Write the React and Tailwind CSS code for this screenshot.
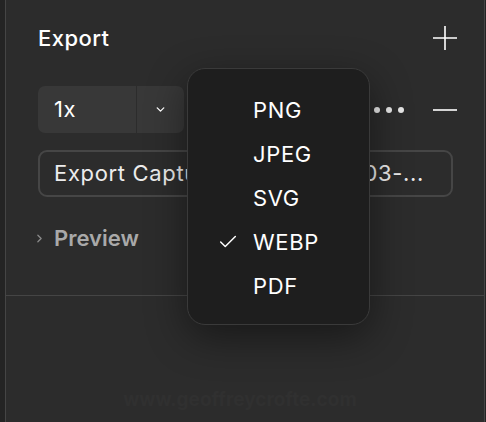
import { Check, ChevronDown, ChevronRight } from "lucide-react";

const formats = ["PNG", "JPEG", "SVG", "WEBP", "PDF"];

function PlusIcon() {
  return (
    <svg width="26" height="26" viewBox="0 0 26 26" className="text-white">
      <path d="M13 1v24M1 13h24" stroke="currentColor" strokeWidth="1.6" fill="none" />
    </svg>
  );
}

function MinusIcon() {
  return (
    <svg width="26" height="26" viewBox="0 0 26 26" className="text-white">
      <path d="M1 13h24" stroke="currentColor" strokeWidth="1.6" fill="none" />
    </svg>
  );
}

function FormatMenu({ selected }) {
  return (
    <div className="absolute left-[187px] top-[68px] w-[183px] h-[257px] rounded-[18px] border border-[#3a3a3a] bg-[#1e1e1e] shadow-[0_12px_40px_rgba(0,0,0,0.45)] pt-[19px]">
      {formats.map((f) => (
        <div key={f} className="relative h-[44px] flex items-center pl-[65px] text-[22px] tracking-[0.03em] text-white">
          {f === selected && (
            <Check className="absolute left-[29px] w-[22px] h-[22px] text-white" strokeWidth={1.6} />
          )}
          {f}
        </div>
      ))}
    </div>
  );
}

export default function App() {
  return (
    <div
      className="relative w-[486px] h-[422px] flex bg-[#2c2c2c] overflow-hidden"
      style={{ fontFamily: "Inter, 'Noto Sans', sans-serif" }}
    >
      <div className="w-[5px] shrink-0 bg-[#242424]" />
      <div className="flex-1 min-w-0 flex flex-col border-l border-r border-[#454545]">
        <div className="pl-[32px] pr-[26px] pt-[18px] border-b border-[#454545] pb-[37px]">
          <div className="h-[40px] flex items-center justify-between">
            <span className="text-[22px] tracking-[0.02em] font-medium text-white">Export</span>
            <PlusIcon />
          </div>

          <div className="mt-[28px] h-[47px] flex items-center">
            <div className="w-[146px] h-[47px] flex rounded-[7px] bg-[#383838] overflow-hidden">
              <div className="w-[99px] flex items-center pl-[16px] text-[22px] tracking-[0.03em] text-white border-r border-[#2c2c2c]">1x</div>
              <div className="flex-1 flex items-center justify-center">
                <ChevronDown className="w-[13px] h-[13px] text-white" strokeWidth={2.6} />
              </div>
            </div>
            <div className="ml-auto mr-[28px] flex items-center gap-[6px]">
              <span className="w-[6px] h-[6px] rounded-full bg-[#e6e6e6]" />
              <span className="w-[6px] h-[6px] rounded-full bg-[#e6e6e6]" />
              <span className="w-[6px] h-[6px] rounded-full bg-[#e6e6e6]" />
            </div>
            <MinusIcon />
          </div>

          <div className="mt-[17px] mr-[5px] h-[47px] min-w-0 overflow-hidden flex items-center rounded-[9px] border-2 border-[#464646] pl-[14px] pr-[27px] text-[22px] tracking-[0.03em] text-[#ececec] whitespace-nowrap">
            <span className="flex-1 min-w-0 overflow-hidden">Export Capture 2024-11-12 at 14.</span>
            <span>03-...</span>
          </div>

          <div className="mt-[21px] h-[40px] flex items-center -ml-[5px]">
            <ChevronRight className="w-[13px] h-[13px] text-[#8a8a8a]" strokeWidth={2.4} />
            <span className="ml-[8px] text-[22px] font-semibold text-[#a9a9a9]">Preview</span>
          </div>
        </div>

        <div className="flex-1 flex items-end justify-center pb-[8px] pr-[10px]">
          <span className="text-[19px] font-bold text-[#303030]">www.geoffreycrofte.com</span>
        </div>
      </div>
      <div className="w-[1px] shrink-0 bg-[#242424]" />

      <FormatMenu selected="WEBP" />
    </div>
  );
}
